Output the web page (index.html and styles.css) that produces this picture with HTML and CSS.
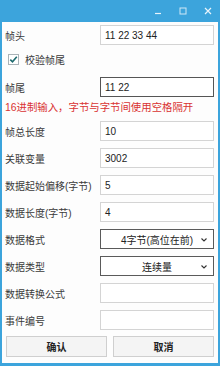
FILE: index.html
```html
<!DOCTYPE html>
<html>
<head>
<meta charset="utf-8">
<link rel="stylesheet" href="styles.css">
</head>
<body>
<div class="window">
  <div class="titlebar">
    <span class="tb-btn">
      <svg width="8" height="8" viewBox="0 0 8 8"><path d="M1 6.5H7" stroke="#e8f4fb" stroke-width="1.2"/></svg>
    </span>
    <span class="tb-btn">
      <svg width="8" height="8" viewBox="0 0 8 8"><rect x="1" y="1" width="6" height="6" fill="none" stroke="#cfe8f6" stroke-width="1"/></svg>
    </span>
    <span class="tb-btn">
      <svg width="8" height="8" viewBox="0 0 8 8"><path d="M1 1L7 7M7 1L1 7" stroke="#e8f4fb" stroke-width="1.2"/></svg>
    </span>
  </div>
  <div class="content">
    <div class="row r-first">
      <span class="label">帧头</span>
      <div class="field">11 22 33 44</div>
    </div>
    <div class="row check-row">
      <span class="checkbox">
        <svg width="11" height="11" viewBox="0 0 11 11"><rect x="0.5" y="0.5" width="10" height="10" fill="#fff" stroke="#a9b3b8"/><path d="M2.3 5.6L4.5 7.8L8.8 2.8" fill="none" stroke="#1d6a6e" stroke-width="1.6"/></svg>
      </span>
      <span class="label">校验帧尾</span>
    </div>
    <div class="row r-tail">
      <span class="label">帧尾</span>
      <div class="field dark">11 22</div>
    </div>
    <div class="hint">16进制输入，字节与字节间使用空格隔开</div>
    <div class="rows">
      <div class="row">
        <span class="label">帧总长度</span>
        <div class="field">10</div>
      </div>
      <div class="row">
        <span class="label">关联变量</span>
        <div class="field">3002</div>
      </div>
      <div class="row">
        <span class="label">数据起始偏移(字节)</span>
        <div class="field">5</div>
      </div>
      <div class="row">
        <span class="label">数据长度(字节)</span>
        <div class="field">4</div>
      </div>
      <div class="row">
        <span class="label">数据格式</span>
        <div class="field select"><span class="sel-text">4字节(高位在前)</span>
          <svg class="chev" width="6" height="4" viewBox="0 0 6 4"><path d="M0.5 0.5L3 3L5.5 0.5" fill="none" stroke="#333" stroke-width="1.1"/></svg>
        </div>
      </div>
      <div class="row">
        <span class="label">数据类型</span>
        <div class="field select"><span class="sel-text">连续量</span>
          <svg class="chev" width="6" height="4" viewBox="0 0 6 4"><path d="M0.5 0.5L3 3L5.5 0.5" fill="none" stroke="#333" stroke-width="1.1"/></svg>
        </div>
      </div>
      <div class="row">
        <span class="label">数据转换公式</span>
        <div class="field"></div>
      </div>
      <div class="row">
        <span class="label">事件编号</span>
        <div class="field"></div>
      </div>
      <div class="buttons">
        <div class="btn">确认</div>
        <div class="btn">取消</div>
      </div>
    </div>
  </div>
</div>
</body>
</html>
```
FILE: styles.css
```css
html, body {
  margin: 0;
  padding: 0;
  background: #3ca4dc;
}
body {
  width: 220px;
  height: 366px;
  overflow: hidden;
  font-family: "Liberation Sans", "Noto Sans CJK SC", sans-serif;
  font-size: 10px;
  color: #333;
}
.window {
  width: 220px;
  height: 366px;
  box-sizing: border-box;
  background: #3ca4dc;
  padding: 0 2px 3px 2px;
  display: flex;
  flex-direction: column;
}
.titlebar {
  height: 22px;
  flex: none;
  display: flex;
  justify-content: flex-end;
  align-items: center;
  padding-right: 6px;
  gap: 17px;
}
.tb-btn {
  width: 8px;
  height: 8px;
  display: flex;
}
.content {
  flex: 1;
  background: #fdfdfd;
  padding: 3px 4px 0 3px;
  display: flex;
  flex-direction: column;
}
.row {
  height: 20px;
  display: flex;
  align-items: center;
  justify-content: space-between;
  flex: none;
}
.label {
  color: #3a3a3a;
  white-space: nowrap;
}
.field {
  width: 114px;
  height: 20px;
  box-sizing: border-box;
  border: 1px solid #d4d4d4;
  background: #fff;
  padding-left: 4px;
  display: flex;
  align-items: center;
  color: #222;
  font-size: 10px;
}
.field.dark {
  border-color: #555;
}
.field.select {
  border-color: #5a5a5a;
  position: relative;
  justify-content: center;
  padding-left: 0;
}
.sel-text {
  color: #222;
}
.chev {
  position: absolute;
  right: 6px;
  top: 8px;
}
.check-row {
  margin-top: 4px;
  justify-content: flex-start;
  gap: 6px;
}
.checkbox {
  display: flex;
  margin-left: 3px;
}
.r-tail {
  margin-top: 8px;
}
.hint {
  color: #d93232;
  font-size: 10.4px;
  line-height: 14px;
  margin-top: 4px;
  white-space: nowrap;
}
.rows {
  display: flex;
  flex-direction: column;
  gap: 7px;
  margin-top: 6px;
}
.buttons {
  display: flex;
  justify-content: space-between;
  margin-top: -1px;
  padding-left: 1px;
}
.btn {
  width: 101px;
  height: 21px;
  box-sizing: border-box;
  border: 1px solid #cfcfcf;
  background: #f4f4f4;
  display: flex;
  align-items: center;
  justify-content: center;
  font-weight: bold;
  color: #222;
  font-size: 10px;
}
```
